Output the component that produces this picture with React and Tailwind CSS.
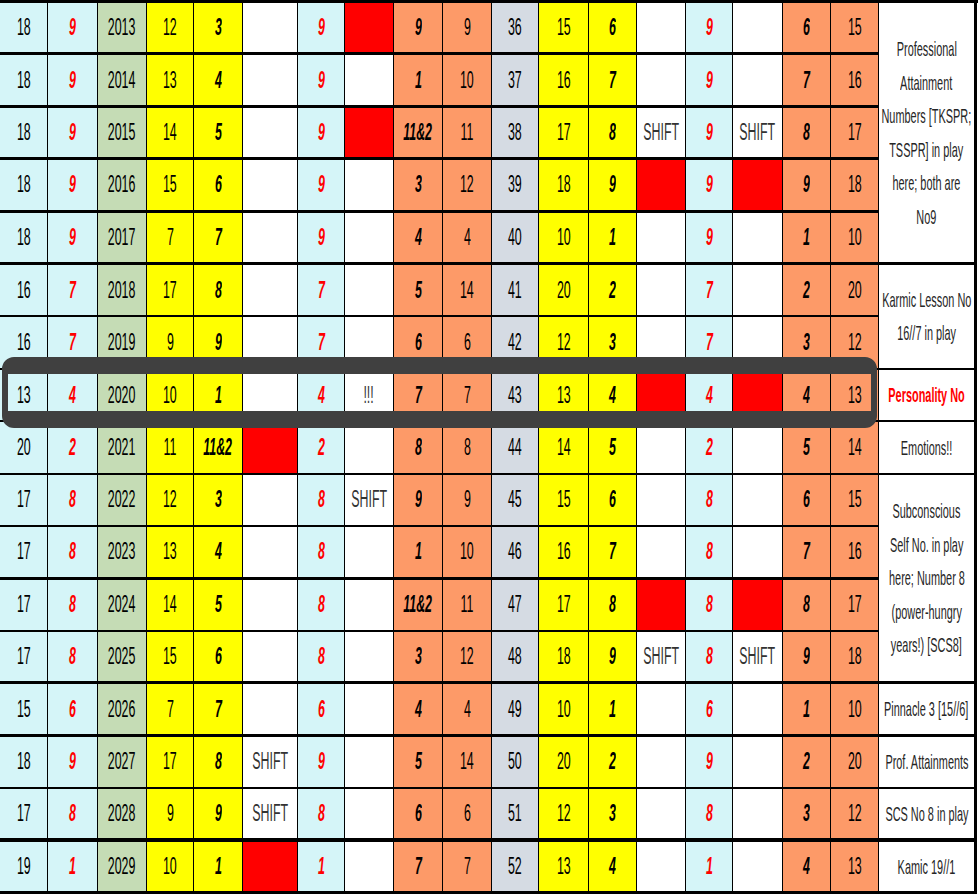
import React from 'react'

// column fills + text style, left to right
const COLS = [
  { bg: 'bg-[#d5f5f8]', t: 'n' },
  { bg: 'bg-[#d5f5f8]', t: 'r' },
  { bg: 'bg-[#c5dcb5]', t: 'n' },
  { bg: 'bg-[#ffff00]', t: 'n' },
  { bg: 'bg-[#ffff00]', t: 'b' },
  { bg: 'bg-white', t: 'n' },
  { bg: 'bg-[#d5f5f8]', t: 'r' },
  { bg: 'bg-white', t: 'n' },
  { bg: 'bg-[#fd9a68]', t: 'b' },
  { bg: 'bg-[#fd9a68]', t: 'n' },
  { bg: 'bg-[#d5dbe3]', t: 'n' },
  { bg: 'bg-[#ffff00]', t: 'n' },
  { bg: 'bg-[#ffff00]', t: 'b' },
  { bg: 'bg-white', t: 'n' },
  { bg: 'bg-[#d5f5f8]', t: 'r' },
  { bg: 'bg-white', t: 'n' },
  { bg: 'bg-[#fd9a68]', t: 'b' },
  { bg: 'bg-[#fd9a68]', t: 'n' },
]

// 'X' = solid red cell
const ROWS = [
  ['18','9','2013','12','3','','9','X','9','9','36','15','6','','9','','6','15'],
  ['18','9','2014','13','4','','9','','1','10','37','16','7','','9','','7','16'],
  ['18','9','2015','14','5','','9','X','11&2','11','38','17','8','SHIFT','9','SHIFT','8','17'],
  ['18','9','2016','15','6','','9','','3','12','39','18','9','X','9','X','9','18'],
  ['18','9','2017','7','7','','9','','4','4','40','10','1','','9','','1','10'],
  ['16','7','2018','17','8','','7','','5','14','41','20','2','','7','','2','20'],
  ['16','7','2019','9','9','','7','','6','6','42','12','3','','7','','3','12'],
  ['13','4','2020','10','1','','4','!!!','7','7','43','13','4','X','4','X','4','13'],
  ['20','2','2021','11','11&2','X','2','','8','8','44','14','5','','2','','5','14'],
  ['17','8','2022','12','3','','8','SHIFT','9','9','45','15','6','','8','','6','15'],
  ['17','8','2023','13','4','','8','','1','10','46','16','7','','8','','7','16'],
  ['17','8','2024','14','5','','8','','11&2','11','47','17','8','X','8','X','8','17'],
  ['17','8','2025','15','6','','8','','3','12','48','18','9','SHIFT','8','SHIFT','9','18'],
  ['15','6','2026','7','7','','6','','4','4','49','10','1','','6','','1','10'],
  ['18','9','2027','17','8','SHIFT','9','','5','14','50','20','2','','9','','2','20'],
  ['17','8','2028','9','9','SHIFT','8','','6','6','51','12','3','','8','','3','12'],
  ['19','1','2029','10','1','X','1','','7','7','52','13','4','','1','','4','13'],
]

// bottom rule under each row
const RULE = [3,3,3,3,3,2,2,2,2,2,3,2,3,3,2,4,3]
const B = { 2: 'border-b-2', 3: 'border-b-[3px]', 4: 'border-b-4' }

// notes column: first row, span, lines
const NOTES = {
  0:  { span: 5, lines: ['Professional', 'Attainment', 'Numbers [TKSPR;', 'TSSPR] in play', 'here; both are', 'No9'] },
  5:  { span: 2, lines: ['Karmic Lesson No', '16//7 in play'] },
  7:  { span: 1, lines: ['Personality No'], red: true },
  8:  { span: 1, lines: ['Emotions!!'] },
  9:  { span: 4, lines: ['Subconscious', 'Self No. in play', 'here; Number 8', '(power-hungry', 'years!) [SCS8]'] },
  13: { span: 1, lines: ['Pinnacle 3 [15//6]'] },
  14: { span: 1, lines: ['Prof. Attainments'] },
  15: { span: 1, lines: ['SCS No 8 in play'] },
  16: { span: 1, lines: ['Kamic 19//1'] },
}
const SPAN = { 1: '', 2: 'row-span-2', 4: 'row-span-4', 5: 'row-span-5' }

function Cell({ v, col, rule }) {
  const red = v === 'X'
  const tone =
    v === 'SHIFT' || v === '!!!' ? 'text-[#333]'
    : col.t === 'r' ? 'text-[#ff0000] font-bold italic'
    : col.t === 'b' ? 'text-black font-bold italic'
    : 'text-black'
  return (
    <div className={`flex items-center justify-center overflow-hidden border-r border-black ${B[rule]} ${red ? 'bg-[#ff0000]' : col.bg}`}>
      {!red && v && (
        <span className={`inline-block whitespace-nowrap text-[23px] leading-none scale-x-[0.54] ${tone}`}>{v}</span>
      )}
    </div>
  )
}

function Note({ note, rule }) {
  return (
    <div className={`flex flex-col items-center justify-center overflow-hidden bg-white border-r-[3px] border-black ${B[rule]} ${SPAN[note.span]}`}>
      {note.lines.map((l) => (
        <span
          key={l}
          className={`inline-block whitespace-nowrap text-[21px] leading-[33.5px] scale-x-[0.52] ${note.red ? 'text-[#ff0000] font-bold' : 'text-[#262626]'}`}
        >
          {l}
        </span>
      ))}
    </div>
  )
}

export default function App() {
  return (
    <div className="relative w-[978px] h-[894px] overflow-hidden bg-white font-['Liberation_Sans',Arial,sans-serif]">
      <div className="grid grid-cols-[48px_50px_49px_47px_49px_55px_47px_49px_49px_49px_47px_50px_48px_49px_47px_50px_48px_48px_98px] grid-rows-[repeat(17,minmax(0,1fr))] h-[894px] border-t-[3px] border-black">
        {ROWS.map((row, r) => {
          const note = NOTES[r]
          const last = note ? r + note.span - 1 : r
          return (
            <React.Fragment key={r}>
              {row.map((v, c) => (
                <Cell key={c} v={v} col={COLS[c]} rule={RULE[r]} />
              ))}
              {note && <Note note={note} rule={RULE[last]} />}
            </React.Fragment>
          )
        })}
      </div>

      {/* highlight frame round the 2020 row */}
      <div className="absolute left-[2px] top-[357px] w-[875px] h-[71px] rounded-[12px] border-x-[6px] border-y-[17px] border-[#404040]" />
    </div>
  )
}
